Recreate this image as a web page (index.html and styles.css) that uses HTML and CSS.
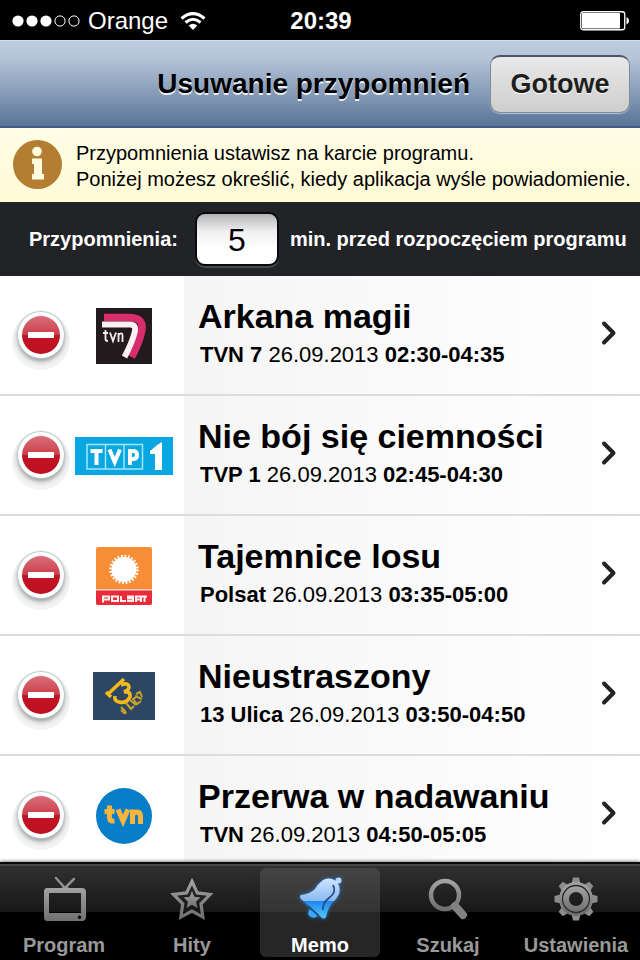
FILE: index.html
```html
<!DOCTYPE html>
<html lang="pl">
<head>
<meta charset="utf-8">
<meta name="viewport" content="width=device-width, initial-scale=1">
<title>Usuwanie przypomnień</title>
<link rel="stylesheet" href="styles.css">
</head>
<body>
<div class="status">
  <div class="status-left">
    <svg width="68" height="12" viewBox="0 0 68 12" aria-hidden="true"><g fill="#fff"><circle cx="6" cy="6" r="5.6"/><circle cx="20" cy="6" r="5.6"/><circle cx="34" cy="6" r="5.6"/></g><g fill="none" stroke="#fff"><circle cx="48" cy="6" r="5.1"/><circle cx="62" cy="6" r="5.1"/></g></svg>
    <span>Orange</span>
    <svg class="wifi" width="26" height="18" viewBox="0 0 26 18" aria-hidden="true"><g fill="none" stroke="#fff" stroke-width="3"><path d="M1.5 6.5Q13-3.3 24.500 6.500"/><path d="M5.500 10.500Q13 4 20.500 10.500"/></g><path d="M8.700 13.600Q13 10.100 17.300 13.600L13 18Z" fill="#fff"/></svg>
  </div>
  <b>20:39</b>
  <div class="status-right">
    <svg width="50" height="20" viewBox="0 0 50 20" aria-hidden="true"><rect x=".75" y=".75" width="44" height="18" rx="2.500" fill="none" stroke="#fff" stroke-width="1.300"/><rect x="2" y="2" width="38" height="15.500" rx="1" fill="#fff"/><path d="M46.500 6Q49 7 49 9.800T46.500 13.500Z" fill="#fff"/></svg>
  </div>
</div>

<header class="nav">
  <h1>Usuwanie przypomnień</h1>
  <button class="done" type="button">Gotowe</button>
</header>

<section class="info">
  <svg width="50" height="50" viewBox="0 0 50 50" aria-hidden="true"><circle cx="25.500" cy="24.500" r="24.500" fill="#b47d31"/><circle cx="25" cy="11.500" r="4.800" fill="#fffce0"/><path d="M20 18.500H30V34H32V39.500H20V34H22V24H20Z" fill="#fffce0"/></svg>
  <p>Przypomnienia ustawisz na karcie programu.<br>Poniżej możesz określić, kiedy aplikacja wyśle powiadomienie.</p>
</section>

<div class="lead">
  <label for="minutes">Przypomnienia:</label>
  <input id="minutes" type="text" inputmode="numeric" value="5">
  <label for="minutes">min. przed rozpoczęciem programu</label>
</div>

<main class="list">
  <ul>
    <li>
      <button class="remove" type="button" aria-label="Usuń"><span></span></button>
      <div class="logo"><svg width="56" height="56" viewBox="0 0 56 56" aria-hidden="true"><path d="M0 0H56V56H0Z" fill="#211b1e"/><path d="M8 9.500H34Q49 10 45.500 24Q43 35 35.500 49" fill="none" stroke="#d92c6c" stroke-width="7.500"/><path d="M6 16.500H34Q41 16.500 38.500 25Q35.500 36 28.500 49" fill="none" stroke="#fff0f6" stroke-width="6"/><path d="M9.500 22V31Q9.500 33 12 33M7 25H12M14 24.500L17 33L20 24.500M22.500 34V25M22.500 27Q26.500 23.500 26.500 27.500V34" fill="none" stroke="#f3edf0" stroke-width="1.800"/></svg></div>
      <a href="#arkana"><div><h2>Arkana magii</h2><p><b>TVN 7</b> 26.09.2013 <b>02:30-04:35</b></p></div><svg class="chevron" width="18" height="26" viewBox="0 0 18 26" aria-hidden="true"><path d="M4 3.500L13.500 13L4 22.500"/></svg></a>
    </li>
    <li>
      <button class="remove" type="button" aria-label="Usuń"><span></span></button>
      <div class="logo"><svg width="98" height="38" viewBox="0 0 98 38" aria-hidden="true"><path d="M0 0H98V38H0Z" fill="#08a7e2"/><path d="M12 7.500H67.500V32H12ZM30.500 7.500V32M49 7.500V32" fill="none" stroke="#a5e5fb" stroke-width="1.500"/><g fill="none" stroke="#fff" stroke-width="4"><path d="M15.500 14H27.500M21.500 14V28"/><path d="M34.500 12.500L39.700 25L45 12.500"/><path d="M55 28V14H58Q62 14 62 18T58 22H55"/></g><path d="M75 14Q80 10 82 8L87 5V33H80V17H75Z" fill="#fff"/></svg></div>
      <a href="#nie-boj-sie"><div><h2>Nie bój się ciemności</h2><p><b>TVP 1</b> 26.09.2013 <b>02:45-04:30</b></p></div><svg class="chevron" width="18" height="26" viewBox="0 0 18 26" aria-hidden="true"><path d="M4 3.500L13.500 13L4 22.500"/></svg></a>
    </li>
    <li>
      <button class="remove" type="button" aria-label="Usuń"><span></span></button>
      <div class="logo"><svg width="56" height="58" viewBox="0 0 56 58" aria-hidden="true"><rect width="56" height="58" rx="2" fill="#f78d36"/><path d="M0 43H56V56Q56 58 54 58H2Q0 58 0 56Z" fill="#e92c3c"/><path d="M0 42.700H56" stroke="#ffd6bd" stroke-width="1.500"/><circle cx="28" cy="22.500" r="12.500" fill="#fff"/><circle cx="28" cy="22.500" r="13.500" fill="none" stroke="#fff" stroke-width="2.500" stroke-dasharray="1.800 1.734"/><path d="M7 55.500V49.500H13V52.500H8M16 49.500H22V54H16ZM25 49V54H30M38 49.500H32V51.500H37V54H31M40 55V49.500H45V55M40 52.500H45M46 49.500H51M48.500 49.500V55" fill="none" stroke="#fff0f0" stroke-width="2"/></svg></div>
      <a href="#tajemnice"><div><h2>Tajemnice losu</h2><p><b>Polsat</b> 26.09.2013 <b>03:35-05:00</b></p></div><svg class="chevron" width="18" height="26" viewBox="0 0 18 26" aria-hidden="true"><path d="M4 3.500L13.500 13L4 22.500"/></svg></a>
    </li>
    <li>
      <button class="remove" type="button" aria-label="Usuń"><span></span></button>
      <div class="logo"><svg width="62" height="48" viewBox="0 0 62 48" aria-hidden="true"><path d="M0 0H62V48H0Z" fill="#2d4663"/><g fill="none" stroke="#f4b91c"><path d="M31 7L14 23M13 20L18 25" stroke-width="3.500"/><path d="M28 13Q35 10 36 15Q36 18 31 20Q38 19 37 25Q33 32 26 30Q21 29 22 24" stroke-width="3.600"/></g><path d="M28 35L32 39Q34 42 31 41L28 38M33 31L38 37L41 34M37 28L43 33M45 24L40 27L44 32L48 29M43 22L47 20L49 25M42 24L49 27" fill="none" stroke="#c99f2c" stroke-width="2"/></svg></div>
      <a href="#nieustraszony"><div><h2>Nieustraszony</h2><p><b>13 Ulica</b> 26.09.2013 <b>03:50-04:50</b></p></div><svg class="chevron" width="18" height="26" viewBox="0 0 18 26" aria-hidden="true"><path d="M4 3.500L13.500 13L4 22.500"/></svg></a>
    </li>
    <li>
      <button class="remove" type="button" aria-label="Usuń"><span></span></button>
      <div class="logo"><svg width="56" height="56" viewBox="0 0 56 56" aria-hidden="true"><circle cx="28" cy="28" r="28" fill="#087dc8"/><g fill="none" stroke="#fbb43c" stroke-width="5"><path d="M13.500 17.500V30Q13.500 33.500 18.500 33M8.500 23.500H18.500"/><path d="M22 21.500L27 33L32 21.500"/><path d="M36.500 36V21.500M36.500 27Q38 24 41 24Q44.500 24 44.500 28V36"/></g></svg></div>
      <a href="#przerwa"><div><h2>Przerwa w nadawaniu</h2><p><b>TVN</b> 26.09.2013 <b>04:50-05:05</b></p></div><svg class="chevron" width="18" height="26" viewBox="0 0 18 26" aria-hidden="true"><path d="M4 3.500L13.500 13L4 22.500"/></svg></a>
    </li>
  </ul>
</main>

<nav class="tabs">
  <a href="#program"><svg width="48" height="48" viewBox="0 0 48 48" aria-hidden="true"><defs><linearGradient id="grey" x2="0" y2="1"><stop stop-color="#a2a2a2"/><stop offset="1" stop-color="#707070"/></linearGradient></defs><path d="M16 4L25 14L34 5" fill="none" stroke="#909090" stroke-width="2.500" stroke-linecap="round"/><path d="M20 15Q25 10 31 15Z" fill="#999"/><path fill="url(#grey)" fill-rule="evenodd" d="M7 14H42Q46 14 46 18V43Q46 47 42 47H7Q4 47 4 43V18Q4 14 7 14ZM9 19V39H41V19ZM39.500 41.500A1.700 1.700 0 1 0 39.600 41.500Z"/></svg>Program</a>
  <a href="#hity"><svg width="48" height="48" viewBox="0 0 48 48" aria-hidden="true"><path d="M24 7.500L29.300 18.900L42 20.500L33 29.800L34.800 43L24 37L12.800 43L14.800 29.800L5.500 20.500L18.500 18.900Z" fill="none" stroke="url(#grey)" stroke-width="3.200"/><path d="M24 17L26.300 22.800L32.500 23.500L28 27.700L29.500 34L24 30.700L18.500 34L20 27.700L15.500 23.500L21.700 22.800Z" fill="url(#grey)"/></svg>Hity</a>
  <a class="active" href="#memo" aria-current="page"><svg width="48" height="48" viewBox="0 0 48 48" aria-hidden="true"><defs><linearGradient id="bell" x2="0" y2="1"><stop stop-color="#d0e4ff"/><stop offset=".56" stop-color="#8abaf4"/><stop offset=".57" stop-color="#1e87ee"/><stop offset="1" stop-color="#55c8ff"/></linearGradient></defs><g class="glow"><circle cx="42.500" cy="6.500" r="3" fill="#b7d6fb"/><path d="M5 21Q14 20 19 15Q25 5 32 4.500Q37 4 41 8Q45 13 43 20Q41 25 36 29Q32 34 30 43Q28 46 25 43L5 25Q3 22 5 21Z" fill="url(#bell)"/><path d="M14 35Q10 40 15 43Q20 45 22 41Z" fill="#38a9fb"/></g><path d="M37 11Q41 18 33 24Q26 29 27 36M12 32L23 42" fill="none" stroke="#214f86" stroke-width="1.800"/></svg>Memo</a>
  <a href="#szukaj"><svg width="48" height="48" viewBox="0 0 48 48" aria-hidden="true"><circle cx="21" cy="21" r="14" fill="none" stroke="url(#grey)" stroke-width="4.500"/><path d="M31 32L39 41" stroke="#818181" stroke-width="8" stroke-linecap="round"/></svg>Szukaj</a>
  <a href="#ustawienia"><svg width="48" height="48" viewBox="0 0 48 48" aria-hidden="true"><g fill="#8d8d8d"><path id="tooth" d="M19.500 10L21 3.500H27L28.500 10Z"/><use href="#tooth" transform="rotate(45 24 25)"/><use href="#tooth" transform="rotate(90 24 25)"/><use href="#tooth" transform="rotate(135 24 25)"/><use href="#tooth" transform="rotate(180 24 25)"/><use href="#tooth" transform="rotate(225 24 25)"/><use href="#tooth" transform="rotate(270 24 25)"/><use href="#tooth" transform="rotate(315 24 25)"/></g><circle cx="24" cy="25" r="12" fill="none" stroke="url(#grey)" stroke-width="10"/><circle cx="24" cy="25" r="13.500" fill="none" stroke="#292929" stroke-width="1.300"/></svg>Ustawienia</a>
</nav>
</body>
</html>
```
FILE: styles.css
```css
* {
  box-sizing: border-box;
}

body {
  margin: 0;
  height: 100vh;
  display: flex;
  flex-direction: column;
  background: #fff;
  color: #000;
  font-family: "Liberation Sans", Arial, sans-serif;
}

h1, h2, p, ul {
  margin: 0;
  padding: 0;
}

svg {
  display: block;
  flex: none;
}

a {
  color: inherit;
  text-decoration: none;
}

button {
  font-family: inherit;
  cursor: pointer;
}

.status {
  flex: none;
  height: 40px;
  padding: 2px 10px 0 12px;
  display: grid;
  grid-template-columns: 1fr auto 1fr;
  align-items: center;
  background: #000;
  color: #fff;
  font-size: 24px;
}

.status-left {
  display: flex;
  align-items: center;
  gap: 8px;
}

.wifi {
  margin-left: 4px;
}

.status-right {
  display: flex;
  justify-content: flex-end;
}

.nav {
  flex: none;
  height: 88px;
  padding: 0 10px;
  display: flex;
  align-items: center;
  justify-content: flex-end;
  gap: 20px;
  border-top: 1px solid #d3dce8;
  border-bottom: 2px solid #3f5b86;
  background: linear-gradient(#becbde, #b5c5d8 20%, #597498);
}

.nav h1 {
  font-size: 28px;
  line-height: 32px;
  text-shadow: 0 2px 0 #e9eef5;
}

.done {
  width: 140px;
  height: 58px;
  padding: 0;
  border: 1px solid #7d899c;
  border-top: 2px solid #4c5361;
  border-radius: 10px;
  background: linear-gradient(#e8e8e8, #cecece);
  box-shadow: 0 1px 1px #b5c1d2;
  color: #1d1e20;
  font-size: 27px;
  font-weight: bold;
  text-shadow: 0 1px 0 #fff;
}

.info {
  flex: none;
  height: 74px;
  padding: 0 8px 0 12px;
  display: flex;
  align-items: center;
  gap: 14px;
  background: linear-gradient(#fffde6, #fffbd6);
}

.info p {
  padding-top: 2px;
  font-size: 20px;
  line-height: 26px;
}

.lead {
  flex: none;
  height: 74px;
  padding: 0 10px 0 29px;
  display: flex;
  align-items: center;
  background: #222327;
  color: #fff;
  font-size: 20px;
  font-weight: bold;
  white-space: nowrap;
}

.lead input {
  width: 84px;
  height: 54px;
  margin: 0 11px 0 17px;
  padding: 2px 0 0;
  border: 2px solid #090a0d;
  border-radius: 10px;
  background: linear-gradient(#b4b4b6, #f0f0f1 35%, #fff 70%);
  box-shadow: 0 2px 1px #4a4b4f;
  color: #000;
  font: 32px "Liberation Sans", Arial, sans-serif;
  text-align: center;
}

.list {
  flex: 1;
  min-height: 0;
  overflow: hidden;
}

.list li {
  height: 120px;
  display: grid;
  grid-template-columns: 64px 120px 1fr;
  border-bottom: 2px solid #dcdcdc;
}

.remove {
  align-self: center;
  justify-self: end;
  width: 46px;
  height: 46px;
  padding: 4px;
  border: 0;
  border-radius: 50%;
  background: #fff;
  box-shadow: 0 0 1px 1px #b9cccc, 0 3px 5px 0 #8a8e8e, 0 6px 0 6px #f3f3f3;
}

.remove span {
  display: grid;
  place-items: center;
  height: 38px;
  border-radius: 50%;
  background: linear-gradient(#d9707a, #cc3d4a 49%, #c01425 50%, #c00f20);
}

.remove span::before {
  content: "";
  width: 26px;
  height: 6px;
  background: #fff;
}

.logo {
  padding-top: 2px;
  display: grid;
  place-items: center;
}

.list a {
  padding: 0 22px 4px 14px;
  display: flex;
  align-items: center;
  justify-content: space-between;
  background: linear-gradient(90deg, #f5f5f5, #fff);
}

.list h2 {
  font-size: 34px;
  line-height: 40px;
}

.list p {
  margin-top: 4px;
  padding-left: 2px;
  font-size: 22px;
  line-height: 30px;
}

.chevron {
  fill: none;
  stroke: #242426;
  stroke-width: 4;
  stroke-linecap: round;
  stroke-linejoin: round;
}

.tabs {
  flex: none;
  height: 98px;
  padding: 4px 0;
  display: grid;
  grid-template-columns: repeat(5, 1fr);
  border-top: 2px solid #090909;
  background: linear-gradient(#464646 0 2px, #303030 2px, #171717 48px, #000 48px);
  box-shadow: 0 -1px 3px #8b8b8b;
  color: #999;
  font-size: 20px;
  font-weight: bold;
  line-height: 24px;
}

.tabs a {
  margin: 0 4px;
  padding-top: 6px;
  display: flex;
  flex-direction: column;
  align-items: center;
  gap: 11px;
  border-radius: 6px;
}

.tabs .active {
  background: linear-gradient(#444 0, #333 44px, #262626 44px);
  color: #fff;
}

.glow {
  filter: drop-shadow(0 0 2px #287bd0);
}
```
